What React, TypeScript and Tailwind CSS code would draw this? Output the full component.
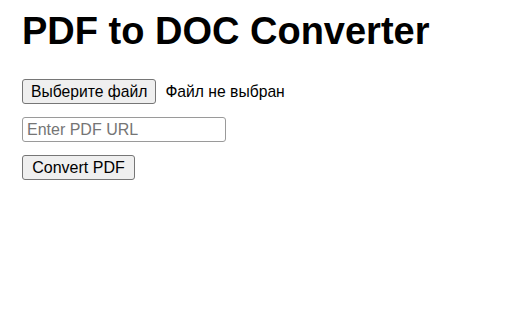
export default function App() {
  return (
    <div className="min-h-[320px] w-[512px] bg-white pl-[22px] font-['Liberation_Sans',Arial,sans-serif] text-black">
      <h1 className="mt-[9px] text-[38px] font-bold leading-[44px]">PDF to DOC Converter</h1>

      {/* file picker */}
      <div className="mt-[26px] flex h-[25px] items-center">
        <button className="flex h-[25px] items-center rounded-[3px] border border-[#767676] bg-[#efefef] px-[8px] text-[15.7px] leading-none text-black">
          Выберите файл
        </button>
        <span className="ml-[9px] text-[15.7px] leading-none">Файл не выбран</span>
      </div>

      <input
        type="text"
        placeholder="Enter PDF URL"
        className="mt-[13px] block h-[25px] w-[204px] rounded-[3px] border border-[#9a9a9a] px-[4px] text-[16px] leading-none outline-none placeholder:text-[#757575]"
      />

      <button className="mt-[13px] flex h-[25px] w-[113px] items-center justify-center rounded-[3px] border border-[#767676] bg-[#efefef] text-[16px] leading-none text-black">
        Convert PDF
      </button>
    </div>
  )
}
